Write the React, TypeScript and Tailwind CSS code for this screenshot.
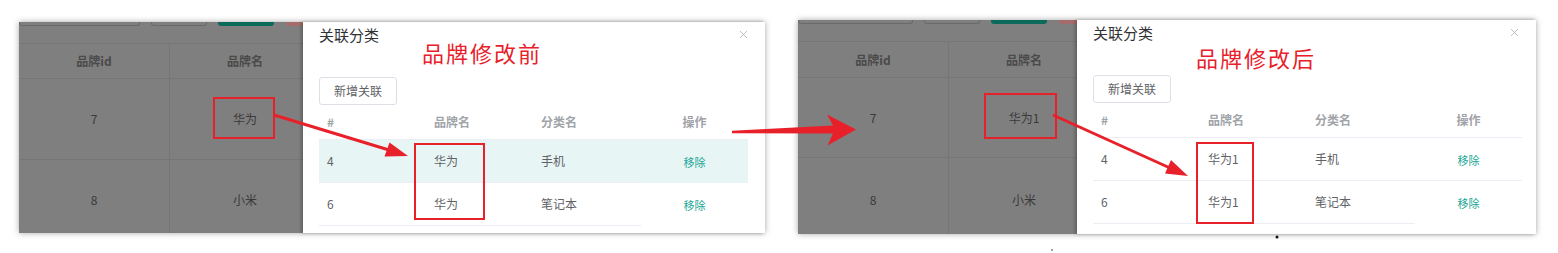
import { X } from 'lucide-react';

const font = { fontFamily: '"Noto Sans CJK SC", "Noto Sans", sans-serif' };

type GrayProps = {
  width: number;
  inputW: number;
  headerH: number;
  rowH: number;
  name: string;
};

// the dimmed page that sits behind the dialog
function GrayPage({ width, inputW, headerH, rowH, name }: GrayProps) {
  return (
    <div className="flex-none h-full overflow-hidden bg-[#7f7f7f] flex flex-col" style={{ width }}>
      <div className="h-[22px] flex-none border-b border-[#767676] flex items-start">
        <div className="h-[4px] border-x border-b border-[#6a6a6a] rounded-b-[3px]" style={{ width: inputW }} />
        <div className="ml-[11px] w-[56px] h-[4px] border-x border-b border-[#6a6a6a] rounded-b-[3px]" />
        <div className="ml-[11px] w-[56px] h-[4px] bg-[#0c6a5b] rounded-b-[3px]" />
        <div className="ml-[12px] flex-1 h-[4px] bg-[#a66c6c] rounded-bl-[3px]" />
      </div>
      <div className="flex text-[12px] font-bold text-[#4a4a4a] border-b border-[#767676]" style={{ height: headerH }}>
        <div className="w-[151px] flex-none flex items-center justify-center border-r border-[#767676]">品牌id</div>
        <div className="w-[150px] flex-none flex items-center justify-center">品牌名</div>
      </div>
      <div className="flex text-[12px] text-[#3a3a3a] border-b border-[#767676]" style={{ height: rowH }}>
        <div className="w-[151px] flex-none flex items-center justify-center border-r border-[#767676]">7</div>
        <div className="w-[150px] flex-none flex items-center justify-center">{name}</div>
      </div>
      <div className="flex-1 flex text-[12px] text-[#3a3a3a]">
        <div className="w-[151px] flex-none flex items-center justify-center border-r border-[#767676] pt-[7px]">8</div>
        <div className="w-[150px] flex-none flex items-center justify-center pt-[7px]">小米</div>
      </div>
    </div>
  );
}

type DialogProps = {
  width: number;
  label: string;
  redShift: string;
  name: string;
  hover: boolean;
};

function Dialog({ width, label, redShift, name, hover }: DialogProps) {
  const rows = [
    { id: '4', cat: '手机' },
    { id: '6', cat: '笔记本' },
  ];
  return (
    <div className="flex-none h-full bg-white px-4 flex flex-col shadow-[-2px_0_3px_rgba(0,0,0,0.25)]" style={{ width }}>
      <div className="h-[55px] flex-none flex flex-col">
        <div className="flex justify-between items-start pt-[4px]">
          <span className="text-[15px] leading-[17px] text-[#303133]">关联分类</span>
          <X size={13} strokeWidth={1.2} className="text-[#9a9da3] mt-[2px] -mr-[1px]" />
        </div>
        <div className={`${redShift} ml-[103px] text-[22px] leading-[26px] tracking-[2px] text-[#e8202a]`}>{label}</div>
      </div>
      <div className="flex-none">
        <button className="w-[78px] h-[28px] border border-[#dcdfe6] rounded-[3px] text-[12px] text-[#606266] bg-white">
          新增关联
        </button>
      </div>
      <div className="w-[429px] text-[12px]">
        <div className="h-[35px] flex items-center font-bold text-[#a0a3a8] border-b border-[#ebeef5]">
          <div className="w-[107px] pl-2">#</div>
          <div className="w-[107px] pl-2">品牌名</div>
          <div className="w-[108px] pl-2">分类名</div>
          <div className="w-[107px] text-center">操作</div>
        </div>
        {rows.map((r, i) => (
          <div
            key={r.id}
            className={`h-[43px] flex items-stretch text-[#606266] ${hover && i === 0 ? 'bg-[#e8f5f5]' : ''}`}
          >
            <div className="w-[322px] flex items-center border-b border-[#ebeef5]">
              <div className="w-[107px] pl-2">{r.id}</div>
              <div className="w-[107px] pl-2">{name}</div>
              <div className="w-[108px] pl-2">{r.cat}</div>
            </div>
            <div
              className={`w-[107px] flex items-center justify-center text-[11px] text-[#1aa595] pt-[2px] ${
                i === 0 && !hover ? 'border-b border-[#ebeef5]' : ''
              }`}
            >
              移除
            </div>
          </div>
        ))}
      </div>
    </div>
  );
}

function Annotations() {
  const red = '#e8202a';
  return (
    <svg className="absolute inset-0 pointer-events-none" width={1558} height={253}>
      <rect x={214} y={98} width={60} height={40} fill="none" stroke={red} strokeWidth={2} />
      <rect x={415} y={144} width={69} height={75} fill="none" stroke={red} strokeWidth={2} />
      <rect x={985} y={94} width={71} height={44} fill="none" stroke={red} strokeWidth={2} />
      <rect x={1197} y={143} width={56} height={80} fill="none" stroke={red} strokeWidth={2} />

      <line x1={274} y1={115} x2={389} y2={150} stroke={red} strokeWidth={3} />
      <polygon points="408,156 384.5,156.5 389.5,142.5" fill={red} />

      <polygon points="732,130.8 833,125.5 827,114.5 856,129.4 827.5,145.5 833,133.5 732,133.3" fill={red} />

      <line x1={1053} y1={115} x2={1170} y2={168} stroke={red} strokeWidth={3} />
      <polygon points="1188,176 1165,173.5 1171,160" fill={red} />

      <circle cx={1277} cy={237} r={1.5} fill="#111" />
      <circle cx={1052} cy={250} r={0.8} fill="#333" />
    </svg>
  );
}

export default function App() {
  return (
    <div className="relative w-[1558px] h-[253px] bg-white overflow-hidden" style={font}>
      <div className="flex items-start pl-[19px]">
        <div className="mt-[22px] w-[746px] h-[211px] flex shadow-[0_0_6px_rgba(0,0,0,0.35)]">
          <GrayPage width={284} inputW={121} headerH={35} rowH={81} name="华为" />
          <Dialog width={462} label="品牌修改前" redShift="-mt-[4px]" name="华为" hover />
        </div>
        <div className="ml-[33px] mt-[20px] w-[738px] h-[214px] flex shadow-[0_0_6px_rgba(0,0,0,0.35)]">
          <GrayPage width={279} inputW={115} headerH={36} rowH={80} name="华为1" />
          <Dialog width={459} label="品牌修改后" redShift="mt-[3px]" name="华为1" hover={false} />
        </div>
      </div>
      <Annotations />
    </div>
  );
}
